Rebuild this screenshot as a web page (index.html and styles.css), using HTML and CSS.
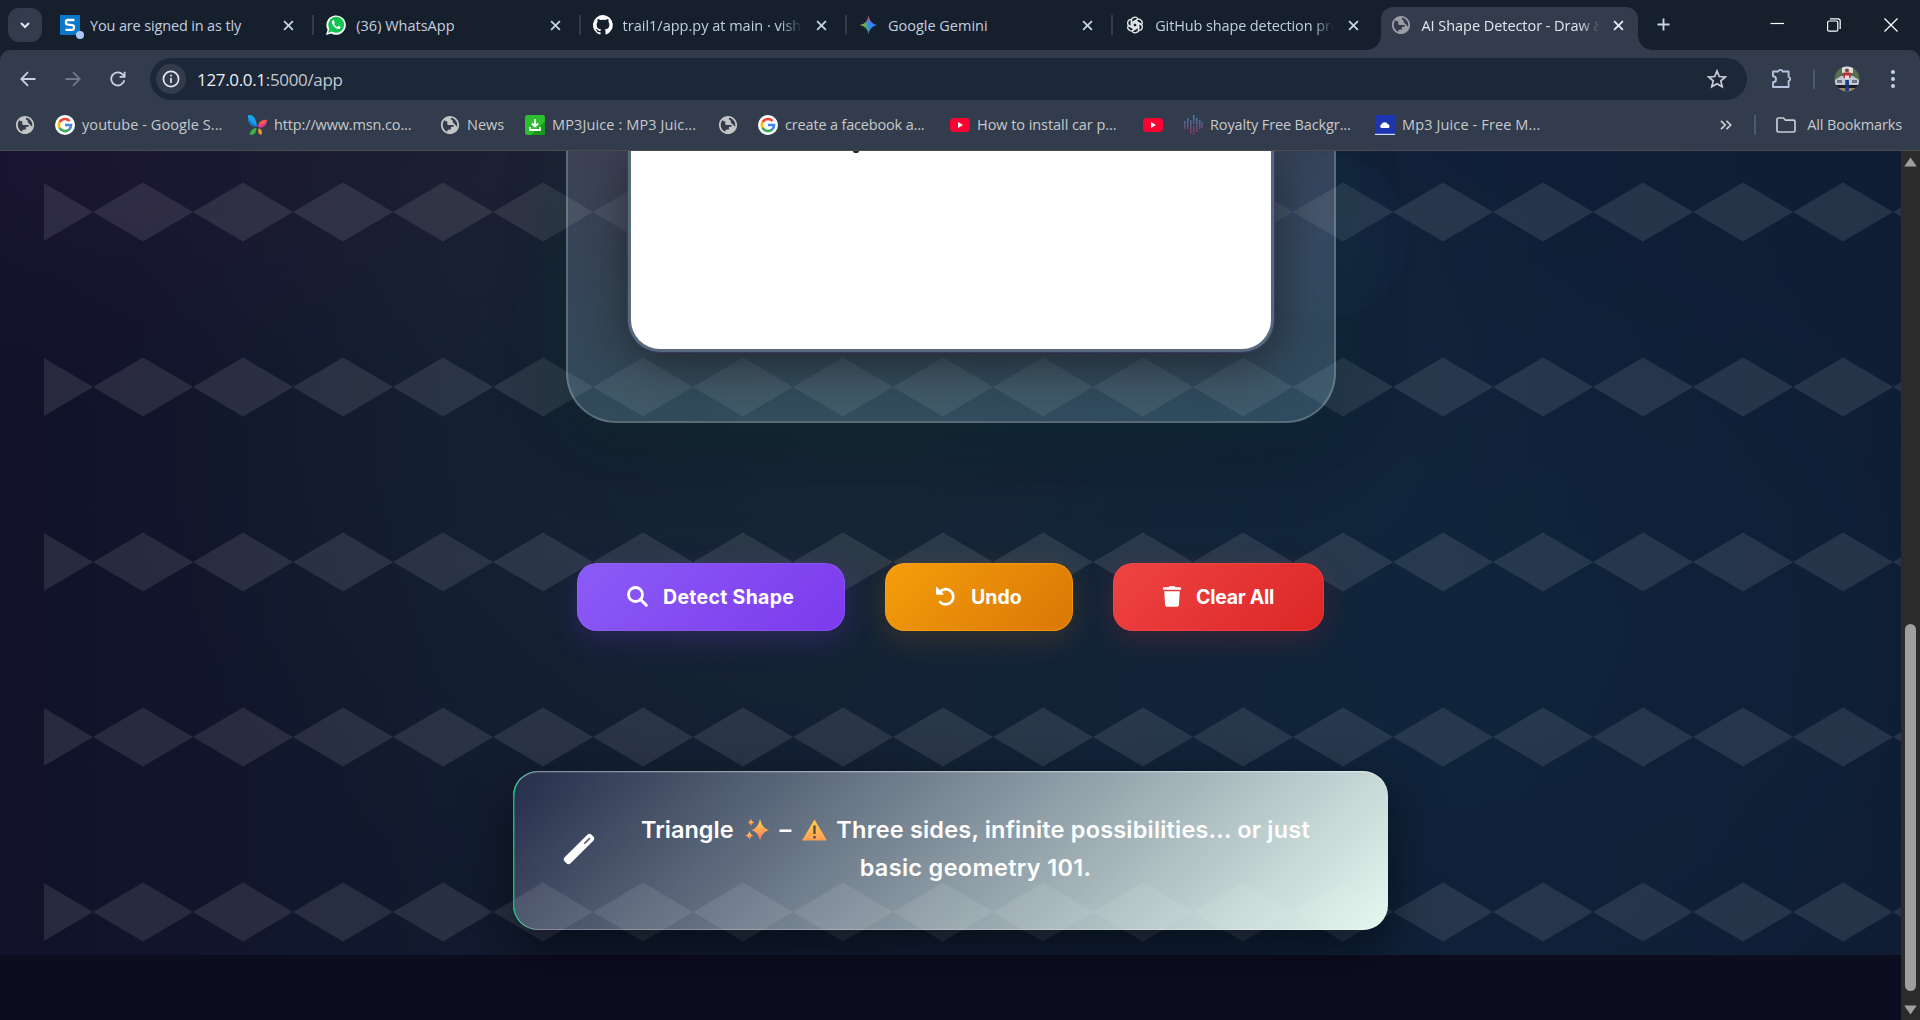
FILE: index.html
```html
<!DOCTYPE html>
<html lang="en">
<head>
<meta charset="utf-8">
<title>AI Shape Detector - Draw &amp; Detect</title>
<link rel="stylesheet" href="styles.css">
</head>
<body>
<svg class="defs" width="0" height="0" aria-hidden="true">
  <defs>
    <linearGradient id="spark" x1="0" y1="0" x2="0" y2="1"><stop offset="0" stop-color="#ffd250"/><stop offset="1" stop-color="#ff7a5a"/></linearGradient>
    <linearGradient id="warn" x1="0" y1="0" x2="0" y2="1"><stop offset="0" stop-color="#ffcf4a"/><stop offset="1" stop-color="#ff9f55"/></linearGradient>
    <linearGradient id="bars" gradientUnits="userSpaceOnUse" x1="0" y1="0" x2="0" y2="20"><stop offset="0" stop-color="#3f9fc8"/><stop offset=".5" stop-color="#6a5f90"/><stop offset="1" stop-color="#a82a5c"/></linearGradient>
    <linearGradient id="gem" x1="0" y1=".6" x2="1" y2=".4"><stop offset="0" stop-color="#f4b824"/><stop offset=".35" stop-color="#4aa96c"/><stop offset=".55" stop-color="#3186ff"/><stop offset="1" stop-color="#3186ff"/></linearGradient>
    <linearGradient id="gemtop" x1="0" y1="0" x2="0" y2="1"><stop offset="0" stop-color="#ef4335"/><stop offset=".42" stop-color="#ef4335" stop-opacity="0"/></linearGradient>
    <symbol id="x" viewBox="0 0 12 12"><path d="M1.200 1.200l9.600 9.600M10.800 1.200l-9.600 9.600" stroke="currentColor" stroke-width="2" fill="none"/></symbol>
    <symbol id="globe" viewBox="1 1 22 22"><path fill="currentColor" d="M12 2C6.480 2 2 6.480 2 12s4.480 10 10 10 10-4.480 10-10S17.520 2 12 2zm-1 17.930c-3.950-.49-7-3.850-7-7.930 0-.62.080-1.210.210-1.790L9 15v1c0 1.100.9 2 2 2v1.930zm6.900-2.540c-.26-.81-1-1.390-1.900-1.390h-1v-3c0-.55-.45-1-1-1H8v-2h2c.55 0 1-.45 1-1V7h2c1.100 0 2-.9 2-2v-.41c2.930 1.190 5 4.060 5 7.410 0 2.080-.8 3.970-2.100 5.390z" transform="rotate(180 12 12)"/></symbol>
    <symbol id="google" viewBox="0 0 20 20"><circle cx="10" cy="10" r="10" fill="#fff"/><g fill="none" stroke-width="2.600"><path d="M14.600 6A6.100 6.100 0 0 0 4.700 7.100" stroke="#ea4335"/><path d="M4.700 7a6.100 6.100 0 0 0 0 6" stroke="#fbbc05"/><path d="M4.700 12.900a6.100 6.100 0 0 0 9.600 1.500" stroke="#34a853"/><path d="M10 10h6a6.200 6.200 0 0 1-1.900 4.600" stroke="#4285f4"/></g></symbol>
    <symbol id="yt" viewBox="0 0 20 20"><rect y="3" width="20" height="14" rx="4" fill="#ff0033"/><path d="M8 7l5 3-5 3z" fill="#fff"/></symbol>
  </defs>
</svg>

<header class="tabstrip">
  <button class="tabsearch"><svg width="12" height="12" viewBox="0 0 12 12"><path d="M2 4l4 4 4-4" fill="none" stroke="#e3e9f5" stroke-width="2"/></svg></button>
  <div class="tabs">
    <div class="tab">
      <svg class="fav" viewBox="0 0 20 20"><rect width="20" height="20" fill="#0a78c8"/><path d="M14.500 5H8Q6 5 6 7v.8q0 1.700 2 1.900l4 .4q2 .2 2 1.900v.8q0 2-2 2H5.500" fill="none" stroke="#fff" stroke-width="2.300"/></svg><i class="badge"></i>
      <span class="t1">You are signed in as tly</span><svg class="close"><use href="#x"/></svg>
    </div>
    <div class="tab">
      <svg class="fav" viewBox="0 0 20 20"><path d="M0 20l1.600-5.200A9.700 9.700 0 1 1 5.200 18.500z" fill="#fff"/><circle cx="10.200" cy="9.800" r="8" fill="#12c351"/><path d="M2.200 17.800l1-4 3 2.800z" fill="#12c351"/><path d="M7 5.300c-1.600.8-1.500 3 .4 5.400s4.600 4 6.200 3c1-.7 1.100-1.500.8-1.900l-2-.9-1.200 1.100c-1.500-.6-2.500-1.700-3.200-3l.8-1.100-.8-2.300z" fill="#fff"/></svg>
      <span class="t2">(36) WhatsApp</span><svg class="close"><use href="#x"/></svg>
    </div>
    <div class="tab">
      <svg class="fav" viewBox="0 0 16 16"><path fill="#fff" d="M8 0a8 8 0 0 0-2.530 15.590c.4.070.55-.17.550-.38v-1.490C3.780 14.200 3.320 12.700 3.320 12.700c-.36-.92-.88-1.170-.88-1.170-.73-.5.05-.49.050-.49.8.06 1.230.83 1.230.83.710 1.210 1.870.86 2.330.66.070-.52.280-.87.500-1.070-1.780-.2-3.640-.89-3.640-3.950 0-.87.310-1.590.820-2.150-.08-.2-.36-1.020.080-2.120 0 0 .67-.21 2.200.82a7.600 7.600 0 0 1 4 0c1.530-1.040 2.200-.82 2.200-.82.440 1.100.16 1.920.08 2.120.51.560.82 1.270.82 2.150 0 3.070-1.870 3.750-3.650 3.950.29.250.54.730.54 1.480v2.200c0 .21.150.46.550.38A8 8 0 0 0 8 0"/></svg>
      <span class="t3 fade">trail1/app.py at main · vishn</span><svg class="close"><use href="#x"/></svg>
    </div>
    <div class="tab">
      <svg class="fav" viewBox="0 0 20 20"><path d="M10 .5q1.500 8 9 9.500-7.500 1.500-9 9.500Q8.500 11.500 1 10 8.500 8.500 10 .5z" fill="url(#gem)"/><path d="M10 .5q1.500 8 9 9.500-7.500 1.500-9 9.500Q8.500 11.500 1 10 8.500 8.500 10 .5z" fill="url(#gemtop)"/></svg>
      <span class="t4">Google Gemini</span><svg class="close"><use href="#x"/></svg>
    </div>
    <div class="tab">
      <svg class="fav" viewBox="0 0 20 20"><g fill="none" stroke="#e4e8ee" stroke-width="1.300"><path id="petal" d="M6.300 11.900V5.800a3.600 3.600 0 0 1 6.700-1.900M8 13V7.100l5.200-3"/><use href="#petal" transform="rotate(60 10 10)"/><use href="#petal" transform="rotate(120 10 10)"/><use href="#petal" transform="rotate(180 10 10)"/><use href="#petal" transform="rotate(240 10 10)"/><use href="#petal" transform="rotate(300 10 10)"/></g></svg>
      <span class="t5 fade">GitHub shape detection pro</span><svg class="close"><use href="#x"/></svg>
    </div>
    <div class="tab active">
      <svg class="fav grey"><use href="#globe"/></svg>
      <span class="t6 fade">AI Shape Detector - Draw &amp;</span><svg class="close"><use href="#x"/></svg>
    </div>
  </div>
  <svg class="newtab" viewBox="0 0 14 14"><path d="M7 .5v13M.5 7h13" stroke="#c6d0e6" stroke-width="2"/></svg>
  <div class="winctl">
    <svg width="14" height="14" viewBox="0 0 14 14"><path d="M.5 5.500h13.500" stroke="#fff" stroke-width="1.200"/></svg>
    <svg width="14" height="14" viewBox="0 0 14 14"><rect x=".6" y="3" width="10.200" height="10.200" rx="1.500" fill="none" stroke="#fff" stroke-width="1.200"/><path d="M3 .8h8q2.200 0 2.200 2.200v8" fill="none" stroke="#fff" stroke-width="1.200"/></svg>
    <svg width="14" height="14" viewBox="0 0 14 14"><path d="M.5.5l13 13M13.500.5l-13 13" stroke="#fff" stroke-width="1.300"/></svg>
  </div>
</header>

<div class="toolbar">
  <nav class="nav">
    <svg viewBox="0 0 16 16"><path d="M15.500 8H1.500M8 1.200L1.300 8 8 14.800" fill="none" stroke="#c6d0e2" stroke-width="1.800"/></svg>
    <svg viewBox="0 0 16 16"><path d="M.5 8h14M8 1.200L14.700 8 8 14.800" fill="none" stroke="#6e7888" stroke-width="1.800"/></svg>
    <svg viewBox="0 0 16 16"><path d="M14.300 9.300A6.600 6.600 0 1 1 12.600 3.300L14.500 5.300M14.600.8v5H9.600" fill="none" stroke="#c6d0e2" stroke-width="1.800"/></svg>
  </nav>
  <div class="omnibox">
    <span class="info"><svg width="18" height="18" viewBox="0 0 18 18"><circle cx="9" cy="9" r="7.600" fill="none" stroke="#e3e6ec" stroke-width="1.700"/><path d="M9 8v5M9 4.800v1.800" stroke="#e3e6ec" stroke-width="1.700"/></svg></span>
    <span class="url"><b>127.0.0.1</b>:5000/app</span>
    <svg class="star" viewBox="0 0 20 20"><path d="M10 2l2.300 5.500 6 .5-4.500 3.900 1.400 5.900L10 14.700l-5.200 3.100 1.400-5.900L1.700 8l6-.5z" fill="none" stroke="#c9cdd4" stroke-width="1.700"/></svg>
  </div>
  <div class="tools">
    <svg class="puzzle" viewBox="0 0 22 22"><path d="M2 4.500h5.200a2.300 2.300 0 0 1 4.400 0h6v5.300a2.300 2.300 0 0 1 0 4.400V20H2v-4.800a2.900 2.900 0 0 0 0-6z" fill="none" stroke="#b6c2dc" stroke-width="1.900" stroke-linejoin="round"/></svg>
    <i class="sep"></i>
    <svg class="avatar" viewBox="0 0 26 26"><clipPath id="round"><circle cx="13" cy="13" r="12.500"/></clipPath><g clip-path="url(#round)"><path d="M0 0h26v26H0z" fill="#58704d"/><path d="M8 0h11v7H8z" fill="#d8dcdc"/><path d="M1 14l6-4h12l6 4v5H1z" fill="#c3c7d4"/><path d="M3 14h5v3H3zM18 14h5v3h-5z" fill="#6d7488"/><path d="M2 19h22v3H2z" fill="#1b1b20"/><path d="M2 22h22v4H2z" fill="#9a8264"/><path d="M9.500 6.500h7V12h-7z" fill="#c9263a"/><circle cx="13" cy="4.500" r="2" fill="#7a4a38"/><path d="M11 9.500h4v3h-4z" fill="#efe6e8"/><path d="M11.300 14h3.600v12h-3.600z" fill="#173a7c"/></g></svg>
    <svg class="dots" viewBox="0 0 4 18"><g fill="#c6d0e6"><circle cx="2" cy="2" r="2"/><circle cx="2" cy="9" r="2"/><circle cx="2" cy="16" r="2"/></g></svg>
  </div>
</div>

<div class="bookmarks">
  <div class="marks">
    <a><svg class="lt"><use href="#globe"/></svg></a>
    <a><svg><use href="#google"/></svg><span class="b1">youtube - Google S...</span></a>
    <a><svg viewBox="0 0 20 20"><path d="M1 0c6-1 8 4 9 11C5 13 0 8 1 0z" fill="#19a3e6"/><path d="M1 3c3 5 6 6 9 8-5 2-9-2-9-8z" fill="#1673cf"/><path d="M20 5c-5-1-9 2-9 7 4 2 9-1 9-7z" fill="#e8368f"/><path d="M20 5c-4 0-7 1-8 4 3 1 6 0 8-4z" fill="#f3623c"/><path d="M9.500 13c-4 0-6 3-7 6.500 4 1 7-1 7-6.500z" fill="#3fae49"/><path d="M11.500 13.500c3 0 4 3 3 6-2 1-4-2-3-6z" fill="#f59a22"/></svg><span class="b2">http://www.msn.co...</span></a>
    <a><svg class="lt"><use href="#globe"/></svg><span class="b3">News</span></a>
    <a><svg viewBox="0 0 20 20"><rect width="20" height="20" rx="2.500" fill="#2dbf2f"/><path d="M20 6v12q0 2-2 2H6z" fill="#179a1c"/><path d="M10 4v7M7 8.500L10 11.500l3-3M5 12v3h10V12" fill="none" stroke="#fff" stroke-width="1.800"/></svg><span class="b4">MP3Juice : MP3 Juic...</span></a>
    <a><svg class="lt"><use href="#globe"/></svg></a>
    <a><svg><use href="#google"/></svg><span class="b5">create a facebook a...</span></a>
    <a><svg><use href="#yt"/></svg><span class="b6">How to install car p...</span></a>
    <a><svg><use href="#yt"/></svg></a>
    <a><svg viewBox="0 0 20 20"><g fill="url(#bars)" opacity=".8"><rect x="1" y="6" width="1.500" height="8"/><rect x="4" y="3" width="1.500" height="11"/><rect x="7" y="5" width="1.500" height="14"/><rect x="10" y="0" width="1.500" height="9"/><rect x="10" y="11" width="1.500" height="9"/><rect x="13" y="3" width="1.500" height="14"/><rect x="16" y="5" width="1.500" height="9"/><rect x="18.500" y="7" width="1.300" height="6"/></g></svg><span class="b7">Royalty Free Backgr...</span></a>
    <a><svg viewBox="0 0 20 20"><path d="M0 0h20v20H0z" fill="#1d35b0"/><path d="M6.500 13a2 2 0 0 1 0-3.700 3.600 3.600 0 0 1 6.500 0A2 2 0 0 1 13.500 13z" fill="#fff"/><path d="M0 18.800h20V20H0z" fill="#d5dcf5"/></svg><span class="b8">Mp3 Juice - Free M...</span></a>
  </div>
  <div class="allmarks">
    <svg class="more" viewBox="0 0 12 10"><path d="M1 .8L5.200 5 1 9.200M6.500.8L10.700 5 6.500 9.200" fill="none" stroke="#c9cdd4" stroke-width="1.700"/></svg>
    <i class="sep"></i>
    <svg class="folder" viewBox="0 0 20 16"><path d="M1 2.500Q1 1 2.500 1H7.500l2 2.200h8Q19 3.200 19 4.700v8.800q0 1.500-1.500 1.500h-15Q1 15 1 13.500z" fill="none" stroke="#c9cdd4" stroke-width="1.700"/></svg>
    <span class="b9">All Bookmarks</span>
  </div>
</div>

<div class="viewport">
  <main class="scene">
    <svg class="pattern" width="1857" height="804">
      <defs><pattern id="diamonds" x="-51" y="-27" width="100" height="175" patternUnits="userSpaceOnUse"><path d="M0 88L50 58.500 100 88 50 117.500z" fill="#fff"/></pattern></defs>
      <rect width="1857" height="804" fill="url(#diamonds)"/>
    </svg>
    <section class="glass"><div class="board"><i class="ink"></i></div></section>
    <div class="actions">
      <button class="btn detect"><svg viewBox="0 0 21 21"><circle cx="8.500" cy="8.500" r="7" fill="none" stroke="#fff" stroke-width="2.800"/><path d="M13.300 13.300l6 6" stroke="#fff" stroke-width="3" stroke-linecap="round"/></svg><span>Detect Shape</span></button>
      <button class="btn undo"><svg viewBox="0 0 21 21"><path d="M4.400 6.500a7.600 7.600 0 1 1 .8 9.600" fill="none" stroke="#fff" stroke-width="2.800" stroke-linecap="round"/><path d="M1 1.300Q1 .3 1.800 1.100L8.500 7.800q1 .9-.2.900H2q-1 0-1-1z" fill="#fff"/></svg><span>Undo</span></button>
      <button class="btn clear"><svg viewBox="0 0 18 21"><path d="M6.200.3h5.600l.8 1h4.600q.8 0 .8.900v1.600H0V2.200q0-.9.800-.9h4.600zM1.200 5.300h15.600l-.9 13.800q-.1 1.600-1.700 1.600H3.800q-1.600 0-1.700-1.600z" fill="#fff"/></svg><span>Clear All</span></button>
    </div>
    <section class="result">
      <svg class="wand" viewBox="0 0 32 32"><g transform="rotate(45 16 16)"><rect x="11.800" y="-3" width="8.400" height="38" rx="3" fill="#fff"/><path d="M16 .5v8" stroke="#5b6373" stroke-width="1.800"/></g></svg>
      <p><span class="r1">Triangle</span><svg class="em sparkle" viewBox="0 0 24 22"><g fill="url(#spark)"><path d="M15 0q1.600 9 9 11-7.400 2-9 10.500Q13.400 13 6.500 11 13.400 9 15 0z"/><path d="M15 2.500L18 8.200 21.500 11 18 13.800 15 19 12 13.800 8.500 11 12 8.200z"/><path d="M6 0q.6 2.800 3 3.500-2.400.7-3 3.500-.6-2.800-3-3.500Q5.400 2.800 6 0z"/><path d="M4.500 12q.9 3.600 4 4.500-3.100.9-4 4.500-.9-3.600-4.500-4.500 3.600-.9 4.500-4.500z"/></g></svg><span class="r2">–</span><svg class="em warning" viewBox="0 0 25 22"><path d="M12.500.5L25 21.500H0z" fill="url(#warn)"/><path d="M12.500 6.500v8.500M12.500 17v2.500" stroke="#4c4848" stroke-width="2.200"/></svg><span class="r3">Three sides, infinite possibilities... or just</span><br><span class="r4">basic geometry 101.</span></p>
    </section>
  </main>
  <aside class="scrollbar">
    <svg viewBox="0 0 13 10"><path d="M6.500.5L12.800 9.500H.2z" fill="#a0a0a0"/></svg>
    <i class="thumb"></i>
    <svg viewBox="0 0 13 10"><path d="M6.500 9.500L12.800.5H.2z" fill="#a0a0a0"/></svg>
  </aside>
</div>
</body>
</html>
```
FILE: styles.css
```css
* { box-sizing: border-box; }
body { margin: 0; width: 1920px; height: 1020px; overflow: hidden; display: flex; flex-direction: column; background: #15202c; font-family: "Open Sans", "Noto Sans", sans-serif; }
svg { display: block; flex: none; }
.defs { position: absolute; }
button { border: 0; padding: 0; font: inherit; color: inherit; }
span { white-space: nowrap; }

/* tab strip */
.tabstrip { height: 50px; display: flex; align-items: flex-start; padding-left: 8px; background: #15202c; }
.tabsearch { width: 34px; height: 34px; margin-top: 8px; border-radius: 11px; background: #323c4c; display: grid; place-items: center; }
.tabs { display: flex; margin-left: 5px; }
.tab { position: relative; width: 266.3px; height: 43px; margin-top: 7px; padding: 0 19px 7px 13px; display: flex; align-items: center; color: #c3cde0; font-size: 14.5px; }
.tab:not(.active):not(:nth-child(5))::after { content: ""; position: absolute; right: -1px; top: 8px; width: 2px; height: 20px; background: #323c4c; }
.tab .fav { width: 20px; height: 20px; margin-right: 10px; }
.tab .fav.grey { color: #9a9ea4; }
.tab:nth-child(4) .fav { width: 19px; }
.badge { position: absolute; left: 29px; top: 24px; width: 8px; height: 8px; border-radius: 50%; background: #a8c7fa; }
.tab .close { width: 11px; height: 11px; margin-left: auto; color: #c6d0e6; }
.t1 { letter-spacing: -.15px; }
.t5 { letter-spacing: -.12px; }
.t6 { letter-spacing: -.05px; }
.fade { width: 192px; margin-right: -12px; -webkit-mask-image: linear-gradient(90deg, #000 158px, transparent 179px); mask-image: linear-gradient(90deg, #000 158px, transparent 179px); }
.tab.active { width: 257px; margin-left: 3px; padding: 0 14px 7px 10px; background: #323c4c; border-radius: 12px 12px 0 0; color: #e3e6ee; }
.tab.active .close { color: #e6eaf2; }
.tab.active::before, .tab.active::after { content: ""; position: absolute; bottom: 0; width: 14px; height: 14px; }
.tab.active::before { left: -14px; background: radial-gradient(circle at 0 0, transparent 13.5px, #323c4c 14px); }
.tab.active::after { right: -14px; background: radial-gradient(circle at 100% 0, transparent 13.5px, #323c4c 14px); }
.newtab { width: 13px; height: 13px; margin: 18px 0 0 19px; }
.winctl { display: flex; margin: 18px 22px 0 auto; gap: 43px; }

/* toolbar */
.toolbar { height: 60px; padding-top: 8px; display: flex; background: #323c4c; border-radius: 10px 10px 0 0; }
.nav { width: 150px; height: 42px; padding-left: 20px; display: flex; align-items: center; gap: 29px; }
.nav svg { width: 16px; height: 16px; }
.omnibox { width: 1597px; height: 42px; border-radius: 21px; background: #1c2737; display: flex; align-items: center; padding: 0 20px 0 6px; }
.info { width: 30px; height: 30px; border-radius: 50%; background: #323c4c; display: grid; place-items: center; }
.url { margin-left: 11px; font-size: 17px; color: #c3c8d0; letter-spacing: -.33px; }
.url b { font-weight: 400; color: #eceef2; }
.star { width: 20px; height: 20px; margin-left: auto; }
.tools { height: 42px; flex: 1; display: flex; align-items: center; }
.puzzle { width: 22px; height: 22px; margin-left: 24px; margin-top: -2px; }
.sep { width: 2px; height: 20px; background: #4d596c; flex: none; }
.tools .sep { margin-left: 20px; }
.avatar { width: 26px; height: 26px; margin-left: 19px; }
.dots { width: 4px; height: 18px; margin-left: 31px; }

/* bookmarks */
.bookmarks { height: 41px; display: flex; align-items: center; justify-content: space-between; background: #323c4c; border-bottom: 1px solid #4a4d50; padding: 0 18px 11px 15px; color: #c7c9cd; font-size: 14.500px; }
.bookmarks span { margin-top: -1px; }
.marks { display: grid; grid-template-columns: 40px 192px 193px 85px 193px 40px 192px 193px 40px 192px 200px; }
.marks a { display: flex; align-items: center; gap: 7px; height: 30px; }
.marks svg { width: 20px; height: 20px; }
.marks .lt { color: #c2c4c6; }
.b1 { letter-spacing: .07px; }
.b2 { letter-spacing: -.14px; }
.b4 { letter-spacing: .12px; }
.b5 { letter-spacing: -.17px; }
.b6 { letter-spacing: -.06px; }
.b7 { letter-spacing: -.13px; }
.b8 { letter-spacing: .13px; }
.b9 { letter-spacing: -.15px; }
.allmarks { display: flex; align-items: center; }
.more { width: 12px; height: 10px; margin-right: 22px; }
.folder { width: 20px; height: 16px; margin: 0 11px 0 20px; }

/* page */
.viewport { height: 869px; display: flex; background: #0d0d20; }
.scene {
  position: relative; width: 1901px; height: 869px; display: flex; flex-direction: column; align-items: center; overflow: hidden;
  background:
    radial-gradient(circle 85px at 1325px 85px, rgba(40, 80, 130, .13), rgba(40, 80, 130, .06) 95%, transparent),
    radial-gradient(ellipse 620px 480px at 1460px 480px, rgba(14, 40, 62, .6), transparent),
    radial-gradient(ellipse 740px 560px at 850px 280px, rgba(30, 50, 58, .5), transparent),
    radial-gradient(ellipse 620px 240px at 560px 0, rgba(40, 32, 52, .5), transparent),
    radial-gradient(ellipse 420px 260px at 60px 0, rgba(32, 22, 58, .5), transparent),
    linear-gradient(90deg, #111229 0, #111a2e 25%, #101f38 75%, #0f1c34 100%);
  background-size: 100% 804px; background-repeat: no-repeat;
}
.pattern { position: absolute; left: 44px; top: 0; opacity: .095; }
.glass {
  position: relative; width: 770px; height: 272px; padding: 0 60px; border: 2px solid rgba(255, 255, 255, .2); border-top: 0; border-radius: 0 0 50px 50px;
  background: linear-gradient(180deg, rgba(150, 155, 180, .27), rgba(105, 155, 170, .34));
  box-shadow: 0 30px 70px rgba(0, 15, 15, .28), 0 0 60px rgba(20, 90, 95, .28);
}
.board { position: relative; height: 201px; border: 3px solid #566a7c; border-top: 0; border-radius: 0 0 32px 32px; background: #fff; box-shadow: 0 0 0 1px rgba(70, 60, 120, .6), 0 10px 50px rgba(24, 24, 26, .7); }
.ink { position: absolute; left: 222px; top: 0; width: 6px; height: 2px; background: #222; border-radius: 0 0 2px 2px; }

.actions { position: relative; margin-top: 140px; display: flex; gap: 40px; font-family: "Inter", sans-serif; }
.btn { height: 68px; border-radius: 20px; display: flex; align-items: center; color: #fff; font-size: 19.500px; font-weight: 700; padding-left: 50px; }
.btn svg { width: 21px; height: 21px; margin-right: 15px; margin-top: -2px; }
.detect { width: 268px; background: linear-gradient(135deg, #8b5cf6, #7c3aed); box-shadow: inset 0 0 0 1px rgba(150, 105, 255, .4), 0 8px 30px rgba(124, 58, 237, .22); }
.detect span { letter-spacing: .3px; }
.undo { width: 188px; background: linear-gradient(135deg, #f59e0b, #d97706); box-shadow: inset 0 0 0 1px rgba(255, 165, 20, .5), 0 8px 30px rgba(217, 119, 6, .18); }
.clear { width: 211px; background: linear-gradient(135deg, #ef4444, #dc2626); box-shadow: inset 0 0 0 1px rgba(255, 80, 80, .4), 0 8px 30px rgba(220, 38, 38, .2); }
.clear svg { width: 18px; margin-right: 15px; }
.clear span { letter-spacing: -.27px; }

.result {
  position: relative; width: 875px; height: 159px; margin-top: 140px; padding: 0 32px 3px 50px; display: flex; align-items: center; border-radius: 25px;
  background: linear-gradient(135deg, rgba(130, 130, 210, .16), rgba(234, 252, 243, .98));
  box-shadow: inset 0 1px 0 rgba(255, 255, 255, .35), inset 0 2px 0 rgba(255, 255, 255, .12), inset 0 -1px 0 rgba(255, 255, 255, .25), inset 1.500px 0 0 #10b981, 0 20px 50px rgba(0, 0, 0, .5);
  color: #fff; font-family: "Inter", sans-serif; font-size: 23.500px; font-weight: 600;
}
.wand { width: 32px; height: 32px; }
.result p { flex: 1; margin: 0; text-align: center; line-height: 38px; }
.r3 { letter-spacing: .19px; }
.r4 { letter-spacing: .32px; }
.em { display: inline-block; height: 22px; vertical-align: -3px; }
.sparkle { width: 24px; margin: 0 11px; }
.warning { width: 25px; margin: 0 9px 0 11px; }

/* scrollbar */
.scrollbar { width: 19px; display: flex; flex-direction: column; align-items: center; background: #2b2b2b; padding: 6px 0 5px; }
.scrollbar svg { width: 13px; height: 10px; }
.thumb { width: 11px; height: 367px; margin: 457px 0 14px; border-radius: 6px; background: #9f9f9f; }
```
